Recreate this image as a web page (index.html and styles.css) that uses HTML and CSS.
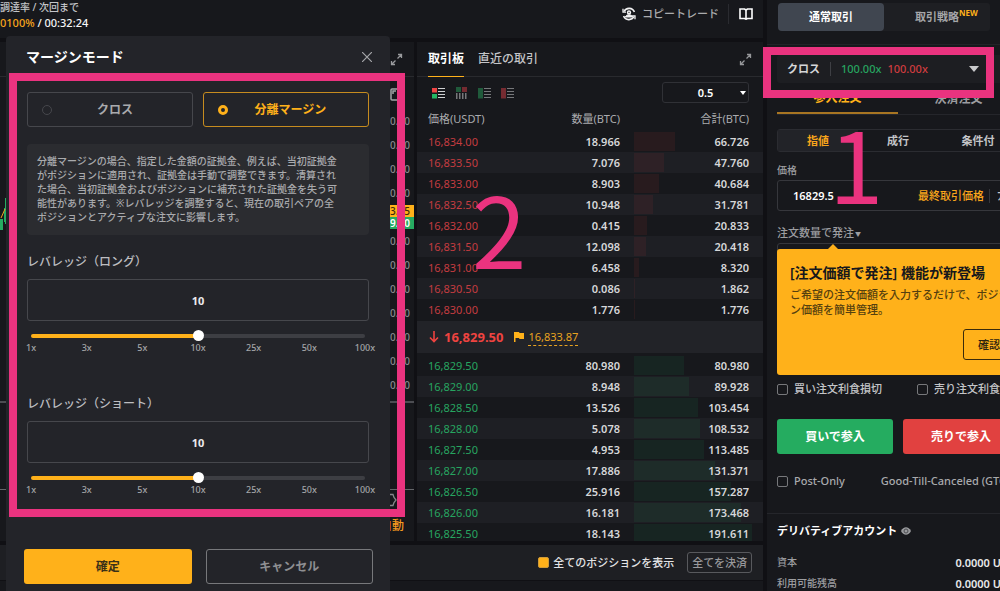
FILE: index.html
```html
<!DOCTYPE html>
<html lang="ja">
<head>
<meta charset="utf-8">
<title>マージンモード</title>
<link rel="stylesheet" href="styles.css">
</head>
<body>
<div class="app">
  <main class="main">
    <header class="top">
      <div class="funding">
        <div class="funding-label">調達率 / 次回まで</div>
        <div class="funding-value"><b>0100%</b> / 00:32:24</div>
      </div>
      <div class="top-links">
        <a class="copy" href="#">
          <svg width="14" height="14" viewBox="0 0 14 14" fill="none" stroke="#f2f2f3" stroke-width="1.6"><path d="M2 4.5A5.7 5.7 0 0 1 12.4 5M12 9.5A5.7 5.7 0 0 1 1.6 9"/><path d="M1 1.8v3.4h3M13 12.2V8.8h-3" stroke-width="1.3"/><circle cx="7" cy="5.4" r="1.4"/><path d="M3.500 10c.3-3 6.700-3 7 0z" fill="#f2f2f3" stroke-width="1"/></svg>
          コピートレード
        </a>
        <a class="book-link" href="#" aria-label="ガイド">
          <svg width="14" height="12" viewBox="0 0 14 12" fill="none" stroke="#fff" stroke-width="1.6"><path d="M1 1h4.500L7 2l1.500-1H13v9.500H8.500L7 11.200l-1.500-.7H1zM7 2v9"/></svg>
        </a>
      </div>
    </header>

    <div class="panels">
      <section class="chart">
        <div class="chart-head">
          <svg width="13" height="13" viewBox="0 0 13 13" fill="none" stroke="#999a9d" stroke-width="1.3"><path d="M8 1.500h3.500V5M11 2L7.500 5.500M5 11.500H1.500V8M2 11l3.500-3.500"/></svg>
        </div>
        <div class="chart-body">
          <svg class="candles" width="6" height="36" viewBox="0 0 6 36"><path d="M0 23h3v11H0zM4 12h2v14H4zM5 2h1v26H5z" fill="#26ab61"/><path d="M1 22L5 13" stroke="#f0a020"/></svg>
          <div class="axis">
            <svg class="camera" width="12" height="13" viewBox="0 0 12 13" fill="none" stroke="#a4a5a8" stroke-width="1.500"><rect x="1" y="1" width="10" height="11" rx="1"/><path d="M3 6V3h3M9 5v1"/></svg>
            <span>0.00</span><span>0.00</span><span>0.00</span><span>0.00</span>
            <em class="tag tag-mark">3.85</em><em class="tag tag-last">9.50</em>
            <span>0.00</span><span>0.00</span><span>0.00</span><span>0.00</span><span>0.00</span><span>0.00</span><span>0.00</span>
          </div>
        </div>
        <div class="chart-volume"></div>
        <div class="chart-foot">
          <svg width="14" height="14" viewBox="0 0 14 14" fill="none" stroke="#85868a" stroke-width="1.300"><path d="M4 1.500h6l1 3 2 2.500-2 2.500-1 3H4l-1-3L1 7l2-2.500z"/></svg>
          <span class="auto">自動</span>
        </div>
      </section>

      <section class="orderbook">
        <nav class="ob-tabs">
          <button class="ob-tab is-active">取引板</button>
          <button class="ob-tab">直近の取引</button>
          <button class="expand" aria-label="拡大"><svg width="13" height="13" viewBox="0 0 13 13" fill="none" stroke="#96979a" stroke-width="1.300"><path d="M8 1.500h3.500V5M11 2L7.500 5.500M5 11.500H1.500V8M2 11l3.500-3.500"/></svg></button>
        </nav>
        <div class="ob-tools">
          <button aria-label="両方"><svg width="13" height="12" viewBox="0 0 13 12"><path fill="#ee4545" d="M0 1h5v4.500H0z"/><path fill="#25b564" d="M0 7h5v4.500H0z"/><path fill="#cfd0d2" d="M6 1h7v1H6zM6 4h7v1H6zM6 7h7v1H6zM6 10h7v1H6z"/></svg></button>
          <button aria-label="横並び"><svg width="13" height="12" viewBox="0 0 13 12"><path fill="#205a3b" d="M1 0h5v5H1z"/><path fill="#752b31" d="M7 0h5v5H7z"/><path fill="#77787b" d="M1 6h1.500v6H1zM4 6h1.500v6H4zM7 6h1.500v6H7zM10 6h1.500v6H10z"/></svg></button>
          <button aria-label="買い"><svg width="13" height="12" viewBox="0 0 13 12"><path fill="#205a3b" d="M0 1h5v10.500H0z"/><path fill="#77787b" d="M6 1h7v1H6zM6 4h7v1H6zM6 7h7v1H6zM6 10h7v1H6z"/></svg></button>
          <button aria-label="売り"><svg width="13" height="12" viewBox="0 0 13 12"><path fill="#752b31" d="M0 1h5v10.500H0z"/><path fill="#77787b" d="M6 1h7v1H6zM6 4h7v1H6zM6 7h7v1H6zM6 10h7v1H6z"/></svg></button>
          <div class="step"><select aria-label="価格単位"><option>0.5</option></select></div>
        </div>
        <table class="book">
          <thead><tr><th>価格(USDT)</th><th>数量(BTC)</th><th>合計(BTC)</th></tr></thead>
          <tbody class="sell">
            <tr><td>16,834.00</td><td>18.966</td><td><i style="width:41px"></i><span>66.726</span></td></tr>
            <tr><td>16,833.50</td><td>7.076</td><td><i style="width:30px"></i><span>47.760</span></td></tr>
            <tr><td>16,833.00</td><td>8.903</td><td><i style="width:25px"></i><span>40.684</span></td></tr>
            <tr><td>16,832.50</td><td>10.948</td><td><i style="width:19px"></i><span>31.781</span></td></tr>
            <tr><td>16,832.00</td><td>0.415</td><td><i style="width:13px"></i><span>20.833</span></td></tr>
            <tr><td>16,831.50</td><td>12.098</td><td><i style="width:12px"></i><span>20.418</span></td></tr>
            <tr><td>16,831.00</td><td>6.458</td><td><i style="width:5px"></i><span>8.320</span></td></tr>
            <tr><td>16,830.50</td><td>0.086</td><td><i style="width:1px"></i><span>1.862</span></td></tr>
            <tr><td>16,830.00</td><td>1.776</td><td><i style="width:1px"></i><span>1.776</span></td></tr>
          </tbody>
        </table>
        <div class="last">
          <svg width="10" height="12" viewBox="0 0 10 12" fill="none" stroke="#ef4340" stroke-width="1.600"><path d="M5 0v10.500M1 6.500l4 4 4-4"/></svg>
          <strong>16,829.50</strong>
          <svg class="flag" width="10" height="10" viewBox="0 0 10 10" fill="#ffb11a"><path d="M0 0h5l.5 1H10v6H5.500L5 6H1.500v4H0z"/></svg>
          <span class="mark">16,833.87</span>
        </div>
        <table class="book">
          <tbody class="buy">
            <tr><td>16,829.50</td><td>80.980</td><td><i style="width:50px"></i><span>80.980</span></td></tr>
            <tr><td>16,829.00</td><td>8.948</td><td><i style="width:55px"></i><span>89.928</span></td></tr>
            <tr><td>16,828.50</td><td>13.526</td><td><i style="width:64px"></i><span>103.454</span></td></tr>
            <tr><td>16,828.00</td><td>5.078</td><td><i style="width:66px"></i><span>108.532</span></td></tr>
            <tr><td>16,827.50</td><td>4.953</td><td><i style="width:70px"></i><span>113.485</span></td></tr>
            <tr><td>16,827.00</td><td>17.886</td><td><i style="width:81px"></i><span>131.371</span></td></tr>
            <tr><td>16,826.50</td><td>25.916</td><td><i style="width:97px"></i><span>157.287</span></td></tr>
            <tr><td>16,826.00</td><td>16.181</td><td><i style="width:107px"></i><span>173.468</span></td></tr>
            <tr><td>16,825.50</td><td>18.143</td><td><i style="width:118px"></i><span>191.611</span></td></tr>
          </tbody>
        </table>
      </section>
    </div>

    <div class="positions">
      <label class="show-all"><input class="check is-solid" type="checkbox" checked>全てのポジションを表示</label>
      <button class="close-all">全てを決済</button>
    </div>
    <div class="positions-body"></div>
  </main>

  <aside class="side">
    <div class="side-head">
      <div class="modes">
        <button class="is-active">通常取引</button>
        <button><span class="mode-name">取引戦略<sup>NEW</sup></span></button>
      </div>
    </div>
    <div class="order">
      <button class="leverage">
        <span class="lev-mode">クロス</span>
        <span class="lev-long">100.00x</span>
        <span class="lev-short">100.00x</span>
        <svg width="10" height="6" viewBox="0 0 10 6" fill="#c9cacc"><path d="M0 0h10L5 6z"/></svg>
      </button>
      <div class="sides">
        <button class="is-active">参入注文</button>
        <button>決済注文</button>
      </div>
      <div class="types">
        <button class="is-active">指値</button>
        <button>成行</button>
        <button>条件付</button>
      </div>
      <label class="field-label" for="price">価格</label>
      <div class="price">
        <input id="price" type="text" value="16829.5">
        <button>最終取引価格</button>
        <span class="plus">ﾌﾟ</span>
      </div>
      <label class="field-label qty-label" for="qty">注文数量で発注<span class="caret">▼</span></label>
      <div class="qty">
        <input id="qty" type="text">
        <div class="popup">
          <h2>[注文価額で発注] 機能が新登場</h2>
          <p>ご希望の注文価額を入力するだけで、ポジショ<br>ン価額を簡単管理。</p>
          <button>確認</button>
        </div>
      </div>
      <div class="tpsl">
        <label><input class="check" type="checkbox">買い注文利食損切</label>
        <label><input class="check" type="checkbox">売り注文利食損切</label>
      </div>
      <div class="actions">
        <button class="buy-btn">買いで参入</button>
        <button class="sell-btn">売りで参入</button>
      </div>
      <div class="tif">
        <label><input class="check" type="checkbox">Post-Only</label>
        <span>Good-Till-Canceled (GTC)</span>
      </div>
    </div>
    <div class="account">
      <h2>デリバティブアカウント
        <svg width="10" height="8" viewBox="0 0 10 8"><path d="M0 4c2.500-5 7.500-5 10 0-2.500 5-7.500 5-10 0z" fill="#98999c"/><circle cx="5" cy="4" r="2" fill="none" stroke="#4b4c50"/></svg>
      </h2>
      <dl>
        <div><dt>資本</dt><dd>0.0000 USDT</dd></div>
        <div><dt>利用可能残高</dt><dd>0.0000 USDT</dd></div>
      </dl>
    </div>
  </aside>

  <div class="modal" role="dialog" aria-labelledby="modal-title">
    <header class="modal-head">
      <h1 id="modal-title">マージンモード</h1>
      <button aria-label="閉じる"><svg width="10" height="10" viewBox="0 0 10 10" stroke="#a5a6a9" stroke-width="1.200"><path d="M0 0l10 10M10 0L0 10"/></svg></button>
    </header>
    <div class="modal-body">
      <div class="options">
        <label class="option"><input type="radio" name="mode"><span>クロス</span></label>
        <label class="option is-on"><input type="radio" name="mode" checked><span>分離マージン</span></label>
      </div>
      <p class="note">分離マージンの場合、指定した金額の証拠金、例えば、当初証拠金<br>がポジションに適用され、証拠金は手動で調整できます。清算され<br>た場合、当初証拠金およびポジションに補充された証拠金を失う可<br>能性があります。※レバレッジを調整すると、現在の取引ペアの全<br>ポジションとアクティブな注文に影響します。</p>
      <div class="lever">
        <label for="long">レバレッジ（ロング）</label>
        <input class="lever-value" id="long" type="text" value="10">
        <input class="slider" type="range" min="0" max="6" value="3" aria-label="ロング">
        <div class="ticks"><span>1x</span><span>3x</span><span>5x</span><span>10x</span><span>25x</span><span>50x</span><span>100x</span></div>
      </div>
      <div class="lever">
        <label for="short">レバレッジ（ショート）</label>
        <input class="lever-value" id="short" type="text" value="10">
        <input class="slider" type="range" min="0" max="6" value="3" aria-label="ショート">
        <div class="ticks"><span>1x</span><span>3x</span><span>5x</span><span>10x</span><span>25x</span><span>50x</span><span>100x</span></div>
      </div>
    </div>
    <footer class="modal-foot">
      <button class="confirm">確定</button>
      <button class="cancel">キャンセル</button>
    </footer>
  </div>

  <div class="frame frame-modal"></div>
  <div class="frame frame-leverage"></div>
  <div class="number number-one">1</div>
  <div class="number number-two">2</div>
</div>
</body>
</html>
```
FILE: styles.css
```css
* { box-sizing: border-box; }
body, h1, h2, p, dl, dd { margin: 0; }
body {
  background: #101014;
  color: #c4c5c8;
  font: 500 11px/14px "Noto Sans", "Noto Sans CJK JP", sans-serif;
  overflow: hidden;
}
button, input, select {
  font: inherit;
  color: inherit;
  background: none;
  border: 0;
  padding: 0;
  margin: 0;
}
button { white-space: nowrap; }
a { color: inherit; text-decoration: none; }
svg { flex: none; }

.app {
  position: relative;
  display: grid;
  grid-template-columns: minmax(0, 1fr) 233px;
  gap: 4px;
  min-height: 100vh;
}
.main { display: flex; flex-direction: column; gap: 4px; }

/* Top bar */
.top {
  display: flex;
  justify-content: space-between;
  height: 38px;
  background: #17181c;
}
.funding { font-size: 10px; }
.funding-value { margin-top: 2px; font-size: 11px; color: #f5f5f6; }
.funding-value b { color: #f7a61c; font-weight: 500; }
.top-links { display: flex; height: 28px; align-items: center; padding-right: 10px; gap: 9px; color: #aaabad; }
.copy { display: flex; gap: 6px; align-items: center; }
.book-link { display: flex; align-items: center; height: 20px; padding-left: 10px; border-left: 1px solid #2a2b30; }

/* Chart */
.panels { display: grid; grid-template-columns: minmax(0, 1fr) 346px; gap: 3px; }
.chart { display: flex; flex-direction: column; background: #17181c; overflow: hidden; }
.chart-head { display: flex; justify-content: flex-end; align-items: center; height: 35px; padding-right: 11px; border-bottom: 1px solid #292a2e; }
.chart-body { display: flex; justify-content: space-between; height: 324px; padding-top: 11px; }
.candles { margin-top: 108px; }
.axis { display: flex; flex-direction: column; width: 24px; line-height: 24px; font-size: 10px; color: #8a8b8e; }
.axis span { padding-right: 7px; text-align: right; }
.camera { margin-bottom: 8px; }
.tag { font-style: normal; line-height: 12px; }
.tag-mark { background: #ffb11a; color: #3a2b0a; }
.tag-last { background: #26ab61; color: #fff; font-weight: 600; }
.chart-volume { height: 89px; border-top: 2px solid #4c4d52; border-bottom: 1px solid #65666a; }
.chart-foot { display: flex; flex-direction: column; align-items: flex-end; gap: 9px; padding: 3px 10px 0 0; color: #f59a1f; font-size: 12px; line-height: 20px; }
.chart-foot svg { margin-right: 7px; }

/* Order book */
.orderbook { height: 499px; overflow: hidden; background: #17181c; }
.ob-tabs { display: flex; gap: 14px; height: 35px; padding: 0 11px; border-bottom: 1px solid #292a2e; font-size: 12px; }
.ob-tab.is-active { color: #fff; font-weight: 700; border-bottom: 1px solid #ffb11a; margin-bottom: -1px; }
.expand { margin-left: auto; display: flex; align-items: center; }
.ob-tools { display: flex; align-items: center; gap: 10px; padding: 5px 14px 4px 15px; }
.ob-tools button { display: flex; }
.step { position: relative; flex: none; width: 87px; margin-left: auto; }
.step select { appearance: none; width: 100%; height: 21px; border: 1px solid #303136; border-radius: 3px; text-align: center; text-align-last: center; color: #fff; font-weight: 600; }
.step::after { content: ""; position: absolute; right: 3px; top: 9px; border: 3px solid transparent; border-top: 4px solid #fff; border-bottom: 0; }
.book { width: 100%; table-layout: fixed; border-collapse: collapse; }
.book th { height: 24px; padding: 0; text-align: right; font-weight: 400; color: #aaabae; }
.book td { height: 21px; padding: 0; text-align: right; font-weight: 600; color: #d6d7d9; line-height: 19px; }
.book th:first-child, .book td:first-child { width: 102px; padding-left: 11px; text-align: left; }
.book td:first-child { font-weight: 400; }
.book th:nth-child(2), .book td:nth-child(2) { padding-right: 14px; }
.book th:last-child, .book td:last-child { width: 129px; padding-right: 14px; }
.book td:last-child { position: relative; }
.book td i { position: absolute; left: 0; top: 1px; height: 19px; }
.book td span { position: relative; }
.book tr:nth-child(even) td { background: #1e1f24; }
.book thead { line-height: 14px; }
.sell td:first-child { color: #c43c40; }
.buy td:first-child { color: #27a560; }
.sell i { background: rgba(239, 60, 60, .08); }
.buy i { background: rgba(37, 181, 100, .09); }
.last { display: flex; align-items: center; height: 32px; margin: 1px 0 2px; padding-left: 12px; background: #222328; }
.last strong { margin-left: 5px; color: #ef4340; font-size: 13px; font-weight: 700; }
.flag { margin-left: 11px; }
.mark { margin-left: 4px; color: #e9a320; border-bottom: 1px dashed #e9a320; line-height: 16px; font-weight: 400; }

/* Positions */
.positions { display: flex; justify-content: flex-end; align-items: center; gap: 13px; height: 35px; padding-right: 11px; background: #1e1f23; }
.positions-body { flex: 1; background: #17181c; margin-top: -3px; }
.show-all { display: flex; align-items: center; gap: 4px; color: #e3e3e5; }
.close-all { height: 21px; padding: 0 4px; border: 1px solid #58595d; border-radius: 3px; color: #99999c; }
.check { appearance: none; flex: none; width: 11px; height: 11px; border: 1px solid #77787b; border-radius: 2px; }
.check.is-solid { background: #ffb11a; border-color: #cf9a38; }

/* Order form */
.side { overflow: hidden; background: #17181c; }
.side-head { padding: 3px 10px 13px 11px; border-bottom: 1px solid #222328; }
.modes { display: grid; grid-template-columns: 1fr 1fr; background: #1e1f23; border-radius: 3px; }
.modes button { height: 28px; border-radius: 4px; font-weight: 600; color: #a5a6a9; }
.modes .is-active { background: #404650; color: #fff; }
.mode-name { position: relative; }
.modes sup { position: absolute; left: 100%; top: 0; font-size: 8px; line-height: 8px; font-weight: 700; color: #ffb11a; }
.order { width: 262px; padding: 10px 10px 0; }
.leverage { display: flex; align-items: center; width: 100%; height: 28px; padding: 0 40px 0 10px; background: #1d1e22; border-radius: 3px; }
.lev-mode { padding-right: 10px; border-right: 1px solid #3e3f44; color: #d5d6d8; font-weight: 600; }
.lev-long { margin-left: 10px; color: #27a560; }
.lev-short { margin-left: 6px; color: #d03c3f; }
.leverage svg { margin-left: auto; }
.sides { display: grid; grid-template-columns: 1fr 1fr; border-bottom: 1px solid #25262b; font-size: 12px; }
.sides button { height: 31px; color: #9c9da0; font-weight: 600; }
.sides .is-active { color: #ffb11a; border-bottom: 2px solid #a87522; }
.types { display: grid; grid-template-columns: 1fr 1fr 1fr; margin-top: 14px; border: 1px solid #2b2c31; border-radius: 3px; }
.types button { height: 21px; font-weight: 600; }
.types .is-active { background: #222328; color: #f9a51b; }
.field-label { display: block; margin-top: 11px; color: #9d9ea1; font-size: 10px; }
.price { display: flex; align-items: center; height: 31px; margin-top: 3px; padding-left: 15px; border: 1px solid #36373c; border-radius: 3px; }
.price input { flex: 1; min-width: 0; color: #fff; font-weight: 600; }
.price button { color: #f9a51b; font-size: 11px; }
.plus { margin-left: 5px; padding-left: 7px; width: 29px; border-left: 1px solid #36373c; color: #c4c5c8; }
.qty-label { margin-top: 15px; font-size: 11px; }
.caret { margin-left: 1px; font-size: 6px; vertical-align: 1px; }
.qty { position: relative; height: 132px; margin-top: 2px; }
.qty > input { width: 100%; height: 31px; border: 1px solid #36373c; border-radius: 3px; }
.popup { position: absolute; top: 6px; left: 0; width: 256px; height: 126px; padding: 14px 13px; background: #ffb11a; border-radius: 3px; color: #55400f; line-height: 15px; }
.popup::before { content: ""; position: absolute; top: -5px; left: 51px; border: 5px solid transparent; border-top: 0; border-bottom-color: #ffb11a; }
.popup h2 { font-size: 14px; line-height: 20px; font-weight: 600; color: #17181c; white-space: nowrap; }
.popup p { margin-top: 4px; white-space: nowrap; }
.popup button { display: block; width: 52px; height: 31px; margin: 12px 0 0 173px; border: 1px solid #3a2b0a; border-radius: 3px; color: #2b2110; }
.tpsl { display: grid; grid-template-columns: 140px 1fr; margin-top: 7px; white-space: nowrap; }
.tpsl label, .tif label { display: flex; align-items: center; gap: 6px; }
.actions { display: grid; grid-template-columns: 1fr 1fr; gap: 10px; margin-top: 23px; }
.actions button { height: 35px; border-radius: 3px; color: #fff; font-size: 12px; font-weight: 700; }
.buy-btn { background: #25ac60; }
.sell-btn { background: #e14140; }
.tif { display: flex; gap: 36px; margin-top: 20px; color: #a9aaad; white-space: nowrap; }

/* Account */
.account { margin-top: 25px; padding: 10px 0 0 10px; border-top: 1px solid #25262b; }
.account h2 { display: flex; align-items: center; gap: 4px; color: #fff; font-size: 11px; line-height: 14px; font-weight: 700; }
.account dl { margin-top: 14px; width: 244px; line-height: 21px; }
.account dl div { display: flex; justify-content: space-between; }
.account dt { color: #9d9ea1; font-size: 10px; }
.account dd { color: #e9e9ea; font-weight: 600; }

/* Margin mode dialog */
.modal {
  position: absolute;
  top: 36px;
  left: 6px;
  bottom: 0;
  width: 384px;
  background: #232429;
  border-radius: 4px 4px 0 0;
}
.modal-head { display: flex; justify-content: space-between; align-items: center; height: 42px; padding: 0 18px 0 20px; }
.modal-head h1 { font-size: 14px; line-height: 20px; color: #fff; font-weight: 700; }
.modal-head button { display: flex; }
.modal-body { padding: 14px 21px 0; }
.options { display: grid; grid-template-columns: 1fr 1fr; gap: 10px; font-size: 12px; font-weight: 600; }
.option { display: flex; align-items: center; height: 35px; padding: 0 25px 0 14px; border: 1px solid #46474c; border-radius: 3px; color: #a9aaad; }
.option span { flex: 1; text-align: center; }
.option input { appearance: none; flex: none; width: 10px; height: 10px; border: 1px solid #46474c; border-radius: 50%; }
.option.is-on { padding-right: 15px; color: #ffb11a; border-color: #c68c1f; }
.option.is-on input { border: 3px solid #ffb11a; }
.option:first-child { padding-right: 14px; }
.note { margin-top: 17px; padding: 10px 0 11px 10px; background: #2b2c30; border-radius: 4px; font-size: 10px; color: #a9aaad; white-space: nowrap; }
.lever { display: flex; flex-direction: column; margin-top: 19px; }
.lever + .lever { margin-top: 43px; }
.lever label { font-size: 12px; line-height: 16px; color: #bcbdc0; }
.lever-value { height: 42px; margin-top: 9px; border: 1px solid #46474c; border-radius: 3px; text-align: center; color: #ececee; font-weight: 700; }
.slider { appearance: none; height: 12px; margin: 9px 4px 0; }
.slider::-webkit-slider-runnable-track { height: 4px; border-radius: 2px; background: linear-gradient(90deg, #ffb11a 50%, #3d3e43 50%); }
.slider::-webkit-slider-thumb { appearance: none; width: 11px; height: 11px; margin-top: -4px; border-radius: 50%; background: #fff; }
.ticks { display: flex; justify-content: space-between; margin: 1px 4px 0; line-height: 10px; font-size: 9px; color: #a4a5a8; }
.ticks span { display: flex; justify-content: center; width: 0; }
.modal-foot { display: grid; grid-template-columns: 1fr 1fr; gap: 14px; margin-top: 54px; padding: 0 17px 0 18px; }
.modal-foot button { height: 35px; border-radius: 3px; font-size: 12px; font-weight: 600; }
.confirm { background: #ffb11a; color: #3a3017; }
.modal-foot .cancel { border: 1px solid #77787b; color: #8e8f92; }

/* Tutorial marks */
.frame { position: absolute; border: 8px solid #ea337f; pointer-events: none; }
.frame-modal { top: 73px; left: 9px; width: 396px; height: 444px; }
.frame-leverage { top: 47px; left: 763px; width: 231px; height: 51px; }
.number { position: absolute; font: 98px/98px "Noto Sans CJK JP", sans-serif; color: #ea337f; pointer-events: none; }
.number-one { top: 112px; left: 829px; }
.number-two { top: 177px; left: 472px; }
```
